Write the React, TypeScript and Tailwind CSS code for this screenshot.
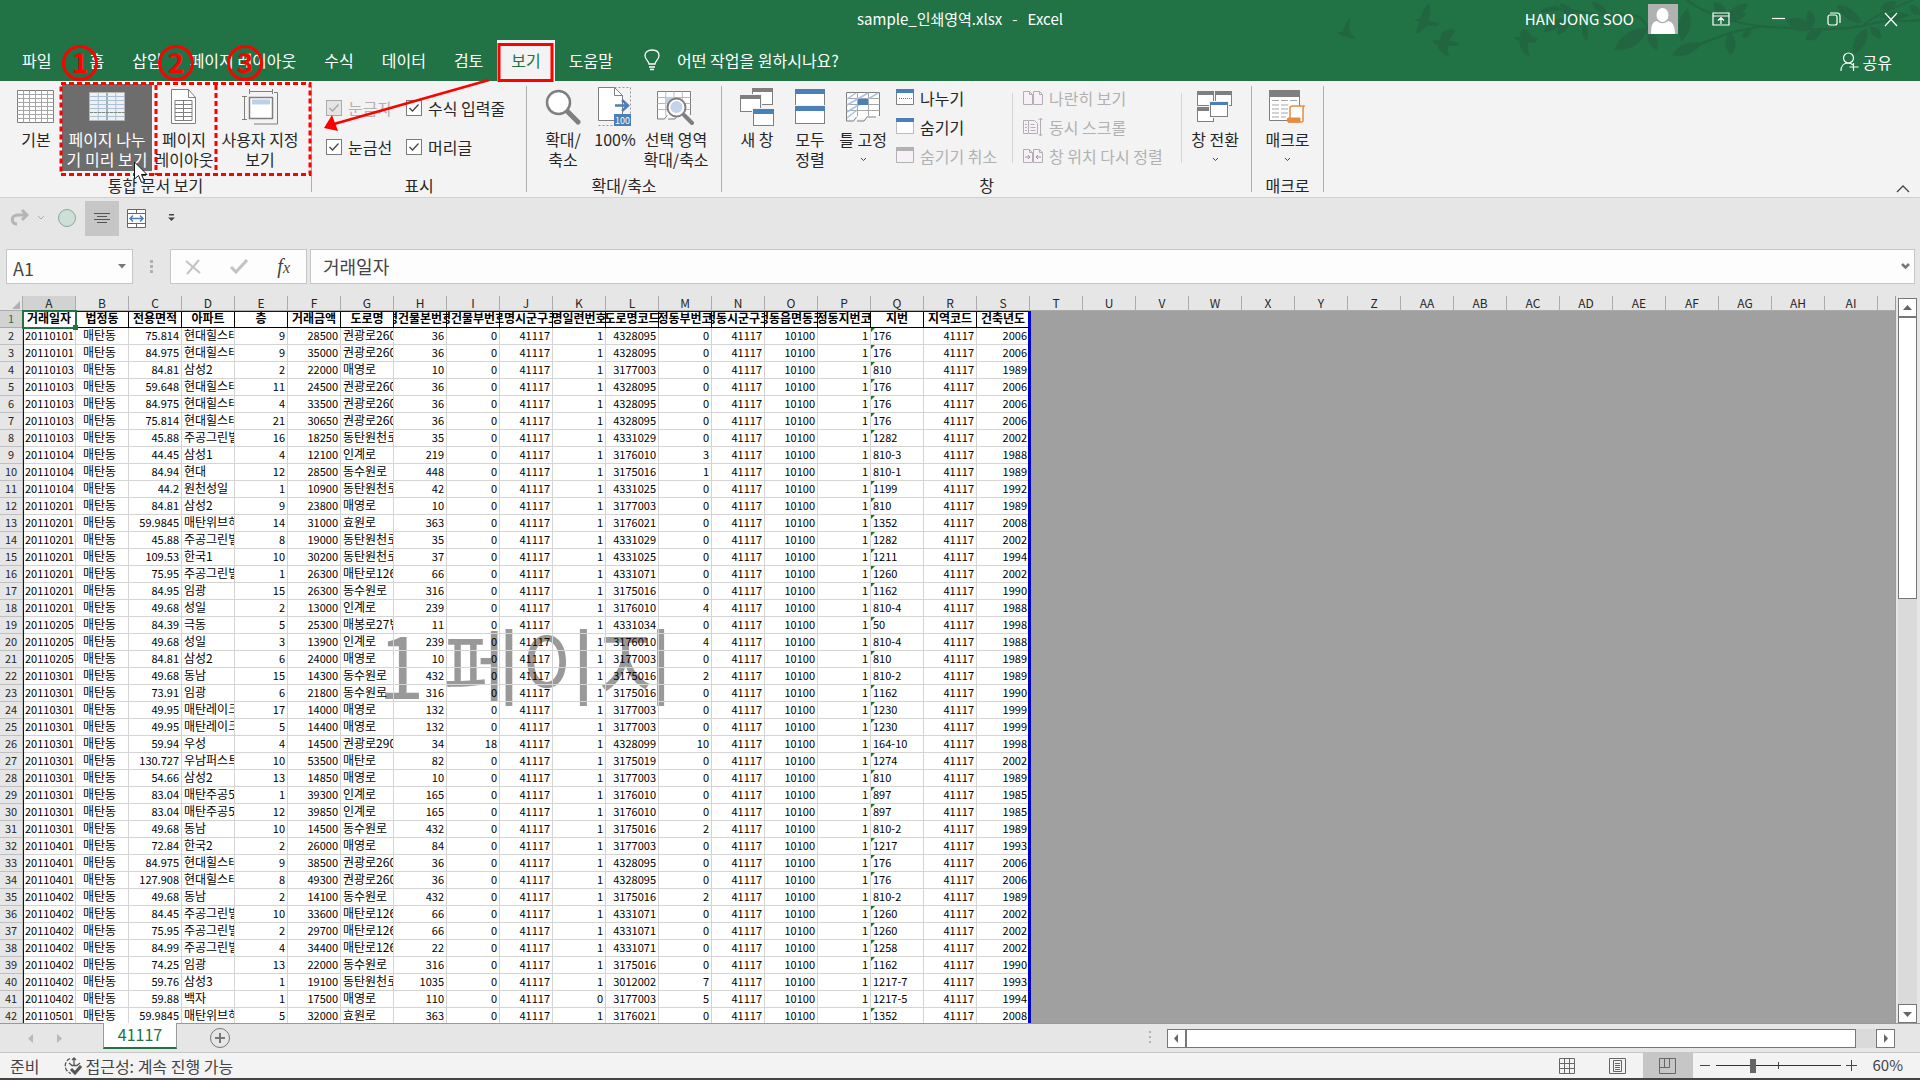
import type { ReactNode } from "react";
import clsx from "clsx";

const GRAY = "#7f7f7f";
const BLUE = "#4a7fb8";
const RED = "#ff0000";

// 날짜|면적|아파트|층|금액|도로명|본번|부번|일련번호|도로명코드|법정동부번|지번|건축년도
const RAW = `20110101|75.814|현대힐스테이트|9|28500|권광로260번길|36|0|1|4328095|0|176|2006
20110101|84.975|현대힐스테이트|9|35000|권광로260번길|36|0|1|4328095|0|176|2006
20110103|84.81|삼성2|2|22000|매영로|10|0|1|3177003|0|810|1989
20110103|59.648|현대힐스테이트|11|24500|권광로260번길|36|0|1|4328095|0|176|2006
20110103|84.975|현대힐스테이트|4|33500|권광로260번길|36|0|1|4328095|0|176|2006
20110103|75.814|현대힐스테이트|21|30650|권광로260번길|36|0|1|4328095|0|176|2006
20110103|45.88|주공그린빌|16|18250|동탄원천로|35|0|1|4331029|0|1282|2002
20110104|44.45|삼성1|4|12100|인계로|219|0|1|3176010|3|810-3|1988
20110104|84.94|현대|12|28500|동수원로|448|0|1|3175016|1|810-1|1989
20110104|44.2|원천성일|1|10900|동탄원천로|42|0|1|4331025|0|1199|1992
20110201|84.81|삼성2|9|23800|매영로|10|0|1|3177003|0|810|1989
20110201|59.9845|매탄위브하늘채|14|31000|효원로|363|0|1|3176021|0|1352|2008
20110201|45.88|주공그린빌|8|19000|동탄원천로|35|0|1|4331029|0|1282|2002
20110201|109.53|한국1|10|30200|동탄원천로|37|0|1|4331025|0|1211|1994
20110201|75.95|주공그린빌|1|26300|매탄로126번길|66|0|1|4331071|0|1260|2002
20110201|84.95|임광|15|26300|동수원로|316|0|1|3175016|0|1162|1990
20110201|49.68|성일|2|13000|인계로|239|0|1|3176010|4|810-4|1988
20110205|84.39|극동|5|25300|매봉로27번길|11|0|1|4331034|0|50|1998
20110205|49.68|성일|3|13900|인계로|239|0|1|3176010|4|810-4|1988
20110205|84.81|삼성2|6|24000|매영로|10|0|1|3177003|0|810|1989
20110301|49.68|동남|15|14300|동수원로|432|0|1|3175016|2|810-2|1989
20110301|73.91|임광|6|21800|동수원로|316|0|1|3175016|0|1162|1990
20110301|49.95|매탄레이크|17|14000|매영로|132|0|1|3177003|0|1230|1999
20110301|49.95|매탄레이크|5|14400|매영로|132|0|1|3177003|0|1230|1999
20110301|59.94|우성|4|14500|권광로290번길|34|18|1|4328099|10|164-10|1998
20110301|130.727|우남퍼스트빌|10|53500|매탄로|82|0|1|3175019|0|1274|2002
20110301|54.66|삼성2|13|14850|매영로|10|0|1|3177003|0|810|1989
20110301|83.04|매탄주공5|1|39300|인계로|165|0|1|3176010|0|897|1985
20110301|83.04|매탄주공5|12|39850|인계로|165|0|1|3176010|0|897|1985
20110301|49.68|동남|10|14500|동수원로|432|0|1|3175016|2|810-2|1989
20110401|72.84|한국2|2|26000|매영로|84|0|1|3177003|0|1217|1993
20110401|84.975|현대힐스테이트|9|38500|권광로260번길|36|0|1|4328095|0|176|2006
20110401|127.908|현대힐스테이트|8|49300|권광로260번길|36|0|1|4328095|0|176|2006
20110402|49.68|동남|2|14100|동수원로|432|0|1|3175016|2|810-2|1989
20110402|84.45|주공그린빌|10|33600|매탄로126번길|66|0|1|4331071|0|1260|2002
20110402|75.95|주공그린빌|2|29700|매탄로126번길|66|0|1|4331071|0|1260|2002
20110402|84.99|주공그린빌|4|34400|매탄로126번길|22|0|1|4331071|0|1258|2002
20110402|74.25|임광|13|22000|동수원로|316|0|1|3175016|0|1162|1990
20110402|59.76|삼성3|1|19100|동탄원천로|1035|0|1|3012002|7|1217-7|1993
20110402|59.88|백자|1|17500|매영로|110|0|0|3177003|5|1217-5|1994
20110501|59.9845|매탄위브하늘채|5|32000|효원로|363|0|1|3176021|0|1352|2008`;

const ROWS = RAW.split("\n").map((line) => {
  const [date, area, apt, floor, price, road, main, sub, serial, code, dongSub, lot, year] = line.split("|");
  return [date, "매탄동", area, apt, floor, price, road, main, sub, "41117", serial, code, dongSub, "41117", "10100", "1", lot, "41117", year];
});

const FIELDS = [
  "거래일자", "법정동", "전용면적", "아파트", "층", "거래금액", "도로명", "도로명건물본번호코드", "도로명건물부번호코드",
  "도로명시군구코드", "도로명일련번호코드", "도로명코드", "법정동부번코드", "법정동시군구코드", "법정동읍면동코드",
  "법정동지번코드", "지번", "지역코드", "건축년도",
];

const COLUMNS = Array.from({ length: 35 }, (_, i) =>
  i < 26 ? String.fromCharCode(65 + i) : "A" + String.fromCharCode(39 + i),
);

/* ---------- title bar ---------- */

const LEAVES = [
  [480, 20, 420, 35, 14], [500, 55, 430, 95, 26], [510, 60, 470, 105, 22], [480, 10, 530, 60, 24], [550, 70, 560, 125, 18],
  [745, 85, 643, 150, 44], [745, 90, 770, 150, 26], [862, 25, 845, 125, 36], [905, 130, 815, 165, 34], [990, 95, 993, 165, 30],
  [980, 50, 940, 5, 28], [975, 60, 1045, 10, 28], [985, 65, 1040, 40, 18], [1055, 90, 1025, 112, 20], [1235, 88, 1160, 60, 38],
  [1265, 88, 1215, 120, 30], [1235, 85, 1228, 30, 26], [1400, 85, 1360, 163, 34], [1385, 70, 1310, 15, 30],
  [1410, 80, 1445, 115, 24], [1440, 30, 1490, 5, 24], [1440, 50, 1530, 45, 22], [1530, 15, 1560, 45, 24], [620, 40, 575, 5, 22],
  [640, 45, 600, 80, 20],
];

const leafPath = ([x1, y1, x2, y2, w]: number[]) => {
  const len = Math.hypot(x2 - x1, y2 - y1);
  const nx = (-(y2 - y1) / len) * w;
  const ny = ((x2 - x1) / len) * w;
  const mx = (x1 + x2) / 2;
  const my = (y1 + y2) / 2;
  return `M${x1} ${y1}Q${mx + nx} ${my + ny} ${x2} ${y2}Q${mx - nx} ${my - ny} ${x1} ${y1}Z`;
};

const TreeArt = () => (
  <svg className="pointer-events-none absolute top-0 right-0" width="600" height="60" viewBox="-240 0 1800 180" fill="#216640">
    <path d="M-191 97l20-2c4-20 14-34 24-44-6 18-6 34-2 48 8 8 14 14 12 18-20-4-34-8-54-20z" />
    <path d="M41 57l20 0c4-20 14-42 26-46 6 12 6 32-2 50 12 4 24 6 33 11l-4 6-33-2c-8 12-22 24-34 24 2-14 8-24 10-34z" />
    <path d="M98 122l24-4c-2-14 8-30 34-30 8 2 10 6 8 10-8 6-14 14-14 24l27 6-2 10-32 0c0 12 0 24 6 32-20-6-34-18-36-34-8-2-14-8-15-14z" />
    <path d="M340 115c8-6 16-4 22-2-2-12 0-22 8-24 12 0 18 6 22 18l20 8-4 14-22-2c-4 14-2 30 4 42-20-4-30-24-32-46z" />
    <g fill="none" stroke="#216640" strokeWidth="7">
      <path d="M430 30C520 20 560 50 650 45S720 60 750 90" />
      <path d="M860 0C900 30 930 40 990 60S1100 80 1180 85S1350 90 1420 70S1500 70 1560 60" />
      <path d="M880 140C940 120 960 100 1080 80" />
      <path d="M1390 75C1420 50 1460 30 1540 0" strokeWidth="5" />
    </g>
    {LEAVES.map((l, i) => (
      <path key={i} d={leafPath(l)} />
    ))}
  </svg>
);

const WinButton = ({ label, children }: { label: string; children: ReactNode }) => (
  <button aria-label={label} className="flex h-full w-[57px] items-center justify-center">
    <svg width="18" height="16" fill="none" stroke="#fff" strokeWidth="1.2">
      {children}
    </svg>
  </button>
);

const TitleBar = () => (
  <div className="flex h-10 items-center pb-0.5 text-[15px] text-white">
    <div className="flex-1" />
    <span className="whitespace-pre">sample_인쇄영역.xlsx   -   Excel</span>
    <div className="relative z-10 flex h-full flex-1 items-center justify-end">
      <span>HAN JONG SOO</span>
      <svg className="mt-1 mr-3.5 ml-3.5 self-start" width="30" height="30">
        <path d="M0 0h30v30H0z" fill="#b1b1b1" />
        <ellipse cx="14.500" cy="11" rx="6" ry="7" fill="#fff" />
        <path d="M3 30c0-8 1-12 6-13 3 3 8 3 11 0 5 1 7 5 7 13z" fill="#fff" />
      </svg>
      <WinButton label="리본 메뉴 표시 옵션">
        <path d="M1 2h16v12H1zM1 5h16M9 13V7M6 9.500l3-3 3 3" />
      </WinButton>
      <WinButton label="최소화">
        <path d="M3 7.500h13" />
      </WinButton>
      <WinButton label="이전 크기로 복원">
        <rect x="2" y="4" width="9" height="10" rx="2" />
        <path d="M4 2h7q3 0 3 3v7" />
      </WinButton>
      <WinButton label="닫기">
        <path d="M2 2l12 13M14 2L2 15" />
      </WinButton>
    </div>
  </div>
);

const Tab = ({ children, active }: { children: ReactNode; active?: boolean }) => (
  <button className={clsx("h-full px-3.5 pb-0.5 whitespace-nowrap", active ? "bg-[#f3f3f3] text-[#217346]" : "text-white")}>
    {children}
  </button>
);

const TabBar = () => (
  <nav className="flex h-[41px] items-center pl-2">
    <Tab>파일</Tab>
    <span className="w-2.5" />
    <Tab>홈</Tab>
    <Tab>삽입</Tab>
    <Tab>페이지 레이아웃</Tab>
    <Tab>수식</Tab>
    <Tab>데이터</Tab>
    <Tab>검토</Tab>
    <Tab active>보기</Tab>
    <Tab>도움말</Tab>
    <button className="ml-4 flex h-full items-center gap-4 pb-0.5 text-white">
      <svg width="18" height="22" fill="none" stroke="#fff" strokeWidth="1.3">
        <path d="M6 15c0-3-4-4-4-8.500C2 3 5 1 9 1s7 2 7 5.500C16 11 12 12 12 15zM6 18h6M7 20.500h4" />
      </svg>
      어떤 작업을 원하시나요?
    </button>
    <button className="z-10 mt-0.5 mr-7 ml-auto flex items-center gap-1 text-white">
      <svg width="19" height="20" fill="none" stroke="#fff" strokeWidth="1.2">
        <circle cx="8.500" cy="6" r="5" />
        <path d="M1 19c0-5 3-8 7-8q3 0 5 2M13.500 11v8M9.500 15h9" />
      </svg>
      공유
    </button>
  </nav>
);

/* ---------- ribbon ---------- */

const grid = (x: number, y: number, w: number, h: number, nx: number, ny: number) => {
  let d = "";
  for (let i = 1; i < nx; i++) d += `M${x + (w * i) / nx} ${y}v${h}`;
  for (let i = 1; i < ny; i++) d += `M${x} ${y + (h * i) / ny}h${w}`;
  return d;
};

const NormalIcon = () => (
  <svg width="38" height="34" fill="none">
    <path d="M.5.5h36v32H.5z" fill="#fff" stroke={GRAY} />
    <path d={grid(0.5, 0.5, 36, 32, 6, 8)} stroke="#a6a6a6" />
  </svg>
);

const PageBreakIcon = () => (
  <svg width="37" height="30" fill="none">
    <path d="M.5.5h35v28H.5z" fill="#f0f0f0" stroke="#b5b5b5" />
    <path d={grid(0.5, 0.5, 35, 28, 4, 7)} stroke="#a9c0d8" />
    <path d="M18 1v28M1 20.500h35" stroke="#7b8a80" strokeDasharray="3 1" />
  </svg>
);

const PageLayoutIcon = () => (
  <svg width="26" height="36" fill="none" stroke={GRAY}>
    <path d="M.5.5h17l7 8v26H.5z" fill="#fff" />
    <path d="M17.500.5v8h7" />
    <path d="M4 11.500h17v20H4z" />
    <path d={grid(4, 11.5, 17, 20, 2, 5)} />
  </svg>
);

const CustomViewIcon = () => (
  <svg width="37" height="36" fill="none" stroke={GRAY}>
    <path d="M12 35h23.500V3.500H32" />
    <path d="M7.500 8.500h23v21h-23z" fill="#fff" strokeWidth="1.5" />
    <path d="M10 10.500h18v5H10z" fill="#bdd0e9" stroke="none" />
    <path d="M7.500 2.500h23M7.500 0v5M30.500 0v5M2.500 7.500v23M0 7.500h5M0 30.500h5" />
  </svg>
);

const ZoomIcon = () => (
  <svg width="36" height="36" fill="none" stroke={GRAY}>
    <path d="M22 22l11 11" strokeWidth="5" strokeLinecap="round" />
    <circle cx="13.500" cy="13.500" r="11.500" fill="#fff" strokeWidth="2.5" />
  </svg>
);

const HundredIcon = () => (
  <svg width="34" height="40" fill="none">
    <path d="M.5 38.500h32V.5H.5" stroke="#999" strokeDasharray="2 2" />
    <path d="M.5.5h16l8 8v25H.5z" fill="#fff" stroke={GRAY} />
    <path d="M16.500.5v8h8" stroke={GRAY} />
    <path d="M17 18.500h12M24 13l6 5.500-6 5.500" stroke={BLUE} strokeWidth="2.5" />
    <path d="M16 27h17v12H16z" fill={BLUE} />
    <text x="24.500" y="36.500" fontSize="9" fill="#fff" textAnchor="middle">
      100
    </text>
  </svg>
);

const ZoomSelectionIcon = () => (
  <svg width="38" height="36" fill="none">
    <path d="M.5 2.500h33v20l-4 6H.5z" fill="#fff" />
    <path d="M.5 30V2.500h33V26M.5 30h7l3-4M11 30h7l2-3" stroke={GRAY} />
    <path d={grid(0.5, 2.5, 33, 24, 4, 4)} stroke="#b9b9b9" />
    <path d="M9 8h8v7H9z" fill="#bdd0e9" />
    <path d="M27 26l8 8" stroke={GRAY} strokeWidth="4" strokeLinecap="round" />
    <circle cx="19.500" cy="18.500" r="9" fill="#fff" stroke={GRAY} strokeWidth="2" />
    <circle cx="19.500" cy="18" r="6" fill="#c3d4ea" />
  </svg>
);

const Win = ({ x, y, w, h, head, color }: { x: number; y: number; w: number; h: number; head: number; color: string }) => (
  <>
    <rect x={x - 1} y={y - 1} width={w + 2} height={h + 2} fill="#f3f3f3" />
    <rect x={x + 0.5} y={y + 0.5} width={w - 1} height={h - 1} fill="#fff" stroke={GRAY} />
    <rect x={x} y={y} width={w} height={head} fill={color} />
  </>
);

const NewWindowIcon = () => (
  <svg width="35" height="39">
    <Win x={12} y={1} w={21} h={17} head={4} color={GRAY} />
    <Win x={0} y={8} w={21} h={17} head={4} color={GRAY} />
    <Win x={13} y={22} w={21} h={17} head={5} color={BLUE} />
  </svg>
);

const ArrangeIcon = () => (
  <svg width="31" height="36">
    <Win x={0} y={0} w={30} h={18} head={5} color={BLUE} />
    <Win x={0} y={17} w={30} h={18} head={5} color={BLUE} />
  </svg>
);

const FreezeIcon = () => (
  <svg width="35" height="32" fill="none">
    <path d="M.5 1.500h33v20l-4 6H.5z" fill="#fff" />
    <path d="M.5 30V1.500h33V25M.5 30h7l3-4M11 30h7l3-4h9" stroke={GRAY} />
    <path d={grid(0.5, 1.5, 33, 24, 3, 4)} stroke="#a6a6a6" />
    <path d="M1 8l9-6M1 14l21-12M1 21l31-19M1 27l10-8" stroke="#a9c0e0" strokeWidth="1.5" />
    <path d="M12 8h10v6H12z" fill={BLUE} />
  </svg>
);

const SwitchIcon = () => (
  <svg width="36" height="33">
    <Win x={0} y={1} w={17} h={15} head={4} color={GRAY} />
    <Win x={18} y={1} w={17} h={15} head={4} color={GRAY} />
    <Win x={0} y={17} w={17} h={15} head={4} color={GRAY} />
    <Win x={13} y={12} w={18} h={15} head={3} color={BLUE} />
  </svg>
);

const MacroIcon = () => (
  <svg width="37" height="34" fill="none">
    <path d="M.5.5h30v30H.5z" fill="#fff" stroke={GRAY} />
    <path d="M0 0h31v7H0z" fill={GRAY} />
    <path d="M3 10.500h7m2 0h7m2 0h7M3 15h7m2 0h7M3 19h7m2 0h7M3 23h7m2 0h7M3 27h7m2 0h5" stroke="#a6a6a6" />
    <path d="M21 29V18q0-2 3-2h11l-1 2v13q0 1-3 1H20z" fill="#fff" stroke="#e58c43" strokeWidth="1.5" />
    <path d="M19 28h12v4H19q-2-2 0-4z" fill="#e58c43" stroke="#e58c43" />
  </svg>
);

const SmallWin = ({ head, edge, dashed, split }: { head: string; edge: string; dashed?: boolean; split?: boolean }) => (
  <svg width="18" height="17" fill="none">
    <path d="M.5.5h17v15H.5z" fill={edge === GRAY ? "#fff" : "#f7f0f7"} stroke={edge} strokeDasharray={dashed ? "1 1" : undefined} />
    <path d="M0 0h18v4H0z" fill={head} />
    {split && <path d="M3 9.500h13" stroke={BLUE} strokeDasharray="1 1" />}
  </svg>
);

const PairIcon = ({ arrows }: { arrows?: boolean }) => (
  <svg width="20" height="16" fill="none" stroke="#b4aeb4">
    <path d="M.5 1.500h6l3 3v10h-9zM10.500 1.500h6l3 3v10h-9z" fill="#f7f0f7" />
    <path d="M6.500 1.500v3h3M16.500 1.500v3h3" />
    {arrows && <path d="M2 9h5M5 7l2 2-2 2M18 9h-5M15 7l-2 2 2 2" stroke="#999" />}
  </svg>
);

const SyncScrollIcon = () => (
  <svg width="20" height="20" fill="none" stroke="#b4aeb4">
    <path d="M5 3.500H.5v13H5M5.500 3.500h6l3 3v10h-9z" fill="#f7f0f7" />
    <path d="M2 7.500h2m-2 3h2m-2 3h2M7.500 7.500h4m-4 3h5m-5 3h5M17.500 1v18M15.500 3l2-2 2 2M15.500 17l2 2 2-2" />
  </svg>
);

const Chevron = () => (
  <svg className="mt-2" width="7" height="5" fill="none" stroke="#444">
    <path d="M1 1l2.500 2.500L6 1" />
  </svg>
);

const BigButton = (props: { icon: ReactNode; lines: string[]; width: string; active?: boolean; menu?: boolean }) => (
  <button
    className={clsx(
      "mt-[3px] flex h-[87px] flex-col items-center leading-5 whitespace-nowrap",
      props.width,
      props.active && "bg-[#6d6d6d] text-white",
    )}
  >
    <span className="flex h-[45px] shrink-0 items-center">{props.icon}</span>
    {props.lines.map((line) => (
      <span key={line}>{line}</span>
    ))}
    {props.menu && <Chevron />}
  </button>
);

const SmallButton = ({ icon, children, disabled }: { icon: ReactNode; children: ReactNode; disabled?: boolean }) => (
  <button disabled={disabled} className="flex h-[29px] items-center gap-1.5 whitespace-nowrap disabled:text-[#b1b1b1]">
    {icon}
    {children}
  </button>
);

const Check = ({ id, label, disabled }: { id: string; label: string; disabled?: boolean }) => (
  <div className="flex h-[39px] items-center gap-1.5 whitespace-nowrap">
    <span className="relative flex">
      <input
        id={id}
        type="checkbox"
        defaultChecked
        disabled={disabled}
        className="size-4 appearance-none border border-[#7a7a7a] bg-white disabled:border-[#aaa] disabled:bg-[#e4e4e4]"
      />
      <svg className="pointer-events-none absolute inset-0" width="16" height="16" fill="none" stroke={disabled ? "#a6a6a6" : "#444"}>
        <path d="M3.500 8l3 3 6-6.500" strokeWidth="1.3" />
      </svg>
    </span>
    <label htmlFor={id} className={disabled ? "text-[#b1b1b1]" : ""}>
      {label}
    </label>
  </div>
);

const Group = ({ caption, width, pad, children }: { caption: string; width: string; pad?: string; children: ReactNode }) => (
  <>
    <section className={clsx("flex shrink-0 flex-col", width)}>
      <div className={clsx("flex h-[94px]", pad)}>{children}</div>
      <div className="pb-0.5 text-center leading-5">{caption}</div>
    </section>
    <div className="my-[5px] w-px shrink-0 bg-[#b0b0b0]" />
  </>
);

const Ribbon = () => (
  <div className="flex border-b border-[#d0d0d0] bg-[#f3f3f3] text-[#262626]">
    <Group caption="통합 문서 보기" width="w-[311px]" pad="pl-2.5">
      <BigButton width="w-[52px]" icon={<NormalIcon />} lines={["기본"]} />
      <BigButton width="w-[90px]" icon={<PageBreakIcon />} lines={["페이지 나누", "기 미리 보기"]} active />
      <BigButton width="w-16" icon={<PageLayoutIcon />} lines={["페이지", "레이아웃"]} />
      <BigButton width="w-[88px]" icon={<CustomViewIcon />} lines={["사용자 지정", "보기"]} />
    </Group>
    <Group caption="표시" width="w-[214px]" pad="pl-3.5">
      <div className="grid grid-cols-[80px_auto] content-start pt-[7px]">
        <Check id="ruler" label="눈금자" disabled />
        <Check id="formula-bar" label="수식 입력줄" />
        <Check id="gridlines" label="눈금선" />
        <Check id="headings" label="머리글" />
      </div>
    </Group>
    <Group caption="확대/축소" width="w-[194px]" pad="pl-1.5">
      <BigButton width="w-[60px]" icon={<ZoomIcon />} lines={["확대/", "축소"]} />
      <BigButton width="w-11" icon={<HundredIcon />} lines={["100%"]} />
      <BigButton width="w-[78px]" icon={<ZoomSelectionIcon />} lines={["선택 영역", "확대/축소"]} />
    </Group>
    <Group caption="창" width="w-[529px]" pad="pl-[5px]">
      <BigButton width="w-[60px]" icon={<NewWindowIcon />} lines={["새 창"]} />
      <BigButton width="w-[46px]" icon={<ArrangeIcon />} lines={["모두", "정렬"]} />
      <BigButton width="w-[60px]" icon={<FreezeIcon />} lines={["틀 고정"]} menu />
      <div className="w-[119px] pt-0.5 pl-[3px]">
        <SmallButton icon={<SmallWin head={BLUE} edge={GRAY} split />}>나누기</SmallButton>
        <SmallButton icon={<SmallWin head={BLUE} edge={GRAY} dashed />}>숨기기</SmallButton>
        <SmallButton icon={<SmallWin head="#b1b1b1" edge="#b1b1b1" />} disabled>
          숨기기 취소
        </SmallButton>
      </div>
      <div className="mt-3 mb-3 w-px bg-[#d4d4d4]" />
      <div className="w-[168px] pt-0.5 pl-2.5">
        <SmallButton icon={<PairIcon />} disabled>
          나란히 보기
        </SmallButton>
        <SmallButton icon={<SyncScrollIcon />} disabled>
          동시 스크롤
        </SmallButton>
        <SmallButton icon={<PairIcon arrows />} disabled>
          창 위치 다시 정렬
        </SmallButton>
      </div>
      <div className="mt-3 mb-3 w-px bg-[#d4d4d4]" />
      <BigButton width="w-[66px]" icon={<SwitchIcon />} lines={["창 전환"]} menu />
    </Group>
    <Group caption="매크로" width="w-[71px]">
      <BigButton width="w-full" icon={<MacroIcon />} lines={["매크로"]} menu />
    </Group>
    <button aria-label="리본 메뉴 축소" className="mr-2.5 mb-1 ml-auto self-end">
      <svg width="14" height="9" fill="none" stroke="#444" strokeWidth="1.3">
        <path d="M1 8l6-6 6 6" />
      </svg>
    </button>
  </div>
);

/* ---------- numbered marks drawn over the ribbon ---------- */

const StepNumber = ({ n, left }: { n: number; left: string }) => (
  <span
    className={clsx(
      "absolute top-[45px] flex size-9 items-center justify-center rounded-full border-3 border-[#ff0000] pb-1 text-[28px] leading-none font-bold text-[#ff0000]",
      left,
    )}
  >
    {n}
  </span>
);

const Marks = () => (
  <div className="pointer-events-none absolute inset-0 z-20">
    <svg className="absolute top-0 left-0" width="620" height="190" fill="none" stroke={RED}>
      <g strokeWidth="3" strokeDasharray="5 3">
        <path d="M61 83.500h249v91H61z" />
        <path d="M156 85v90M216 85v90" />
      </g>
      <path d="M499 44.500h53v36h-53z" strokeWidth="3" />
      <path d="M489 80L334 124" strokeWidth="2.5" />
      <path d="M324 128l8-13 6 16z" fill={RED} stroke="none" />
      <path d="M134.500 162v17l4-3.500 3 7 3-1-3-7h5.500z" fill="#fff" stroke="#111" />
    </svg>
    <StepNumber n={1} left="left-[62px]" />
    <StepNumber n={2} left="left-[158px]" />
    <StepNumber n={3} left="left-[227px]" />
  </div>
);

/* ---------- quick access + formula bar ---------- */

const QuickAccess = () => (
  <div className="flex h-10 items-center pl-2.5">
    <button aria-label="다시 실행" disabled>
      <svg width="19" height="18" fill="none" stroke="#b5b5b5" strokeWidth="3">
        <path d="M7 15C1 15 0 6 8 6h8M12 1l5 5-5 5" />
      </svg>
    </button>
    <svg className="ml-2" width="8" height="6" fill="none" stroke="#aaa">
      <path d="M1 1l3 3 3-3" />
    </svg>
    <button aria-label="기록" className="ml-[13px] size-[18px] rounded-full border border-[#7fae9a] bg-[#cfdfd8]" />
    <button aria-label="가운데 맞춤" className="ml-[9px] flex h-[35px] w-[34px] items-center justify-center bg-[#c6c6c6]">
      <svg width="16" height="12" stroke="#555">
        <path d="M0 1.500h16M3 4.500h10M0 7.500h16M3 10.500h10" />
      </svg>
    </button>
    <button aria-label="병합하고 가운데 맞춤" className="ml-2">
      <svg width="19" height="19" fill="none" stroke="#666">
        <path d="M.5.5h18v18H.5zM.5 4.500h18M.5 14.500h18M9.500.5v4M9.500 14.500v4" fill="#fff" />
        <path d="M3 9.500h13M6 6.500l-3 3 3 3M13 6.500l3 3-3 3" stroke={BLUE} strokeWidth="1.5" />
      </svg>
    </button>
    <button aria-label="빠른 실행 도구 모음 사용자 지정" className="ml-[22px]">
      <svg width="7" height="8" fill="#444">
        <path d="M1 0h5v1.500H1zM0 3.500h7L3.500 7z" />
      </svg>
    </button>
  </div>
);

const FormulaBar = () => (
  <div className="mt-[11px] mb-3 flex h-[35px] items-stretch pr-[5px] pl-1.5 text-lg text-[#444]">
    <div className="flex w-[127px] items-center border border-[#c6c6c6] bg-[#fdfdfd] pr-1.5">
      <input aria-label="이름 상자" defaultValue="A1" className="w-full min-w-0 pt-0.5 pl-1.5 outline-none" />
      <button aria-label="이름 목록">
        <svg width="8" height="5" fill="#777">
          <path d="M0 0h8L4 4.500z" />
        </svg>
      </button>
    </div>
    <svg className="mx-[17px] self-center" width="3" height="14" fill="#b0b0b0">
      <path d="M0 0h3v3H0zM0 5h3v3H0zM0 10h3v3H0z" />
    </svg>
    <div className="flex w-[137px] items-center justify-between border border-[#c6c6c6] bg-[#fdfdfd] px-3.5">
      <button aria-label="취소">
        <svg width="16" height="16" fill="none" stroke="#c3c3c3" strokeWidth="2">
          <path d="M1 2l14 12M14 1L2 15" />
        </svg>
      </button>
      <button aria-label="입력">
        <svg width="18" height="15" fill="none" stroke="#c3c3c3" strokeWidth="3">
          <path d="M1 8l5 5L17 1" />
        </svg>
      </button>
      <button aria-label="함수 삽입" className="pr-0.5 font-['Liberation_Serif',serif] text-xl leading-6 text-[#444] italic">
        f<span className="text-base">x</span>
      </button>
    </div>
    <div className="ml-[3px] flex flex-1 items-center border border-[#c6c6c6] bg-[#fdfdfd] pr-1">
      <input aria-label="수식 입력줄" defaultValue="거래일자" className="min-w-0 flex-1 pb-0.5 pl-3 outline-none" />
      <svg width="9" height="7" fill="none" stroke="#777" strokeWidth="2.5">
        <path d="M1 1l3.500 3.500L8 1" />
      </svg>
    </div>
  </div>
);

/* ---------- sheet ---------- */

const LEFT_ALIGNED = [1, 3, 6, 16];

const Cell = ({ value, col }: { value: string; col: number }) => (
  <td
    className={clsx(
      "relative overflow-hidden border-r border-b border-[#d4d4d4] px-0.5 pb-0.5 whitespace-nowrap",
      LEFT_ALIGNED.includes(col) ? "text-left" : "text-right",
      col === 1 && "pl-[7px]",
      (col === 1 || col === 3 || col === 6) && "text-xs/[14px]",
    )}
  >
    {col === 16 && !value.includes("-") && (
      <svg className="absolute top-0 left-0" width="4" height="4" fill="#107c10">
        <path d="M0 0h4L0 4z" />
      </svg>
    )}
    {value}
  </td>
);

const Sheet = () => (
  <div className="relative min-w-0 flex-1 overflow-hidden border-r border-[#999]">
    <div className="absolute top-[15px] bottom-0 left-[23px] flex w-[1007px] items-center justify-center bg-white pb-2 text-[84px] leading-none text-[#999]">
      <span>1 페이지</span>
    </div>
    <table className="relative w-full table-fixed border-separate border-spacing-0 text-[11px]/[14px] text-black">
      <colgroup>
        <col className="w-[23px]" />
        {COLUMNS.map((c) => (
          <col key={c} className="w-[53px]" />
        ))}
        <col />
      </colgroup>
      <thead>
        <tr className="bg-[#e6e6e6] text-xs/[14px]">
          <th className="border-r border-b border-[#ababab] p-0">
            <svg className="mt-1 ml-3" width="8" height="8" fill="#b0b0b0">
              <path d="M8 0v8H0z" />
            </svg>
          </th>
          {COLUMNS.map((c, i) => (
            <th
              key={c}
              className={clsx(
                "border-r border-b border-[#ababab] p-0 font-normal text-[#262626]",
                i === 0 && "bg-[#d2d2d2] text-[#217346]",
              )}
            >
              {c}
            </th>
          ))}
          <th className="border-b border-[#ababab] p-0" />
        </tr>
      </thead>
      <tbody>
        <tr>
          <th className="border-r border-b border-[#ababab] bg-[#d2d2d2] p-0 pb-0.5 font-normal text-[#217346]">1</th>
          {FIELDS.map((name) => (
            <td key={name} className="border-r border-b border-black p-0 text-xs/4 font-bold">
              <div className="flex justify-center overflow-hidden pb-0.5 leading-[14px] whitespace-nowrap">
                <span className="shrink-0">{name}</span>
              </div>
            </td>
          ))}
          <td colSpan={17} className="bg-[#a0a0a0]" />
        </tr>
        {ROWS.map((row, r) => (
          <tr key={r}>
            <th className="border-r border-b border-[#c0c0c0] bg-[#e6e6e6] p-0 pb-0.5 font-normal text-[#262626]">{r + 2}</th>
            {row.map((value, c) => (
              <Cell key={c} value={value} col={c} />
            ))}
            <td colSpan={17} className="bg-[#a0a0a0]" />
          </tr>
        ))}
      </tbody>
    </table>
    <div className="pointer-events-none absolute top-[15px] bottom-0 left-[23px] w-[1008px] border-t border-r-3 border-l border-[#0000cc]" />
    <div className="pointer-events-none absolute top-[14px] left-[22px] h-[19px] w-[55px] border-2 border-[#217346]">
      <span className="absolute -right-[3px] -bottom-[3px] size-[5px] bg-[#217346]" />
    </div>
  </div>
);

const ScrollButton = ({ label, d }: { label: string; d: string }) => (
  <button aria-label={label} className="flex size-[19px] shrink-0 items-center justify-center border border-[#777] bg-white">
    <svg width="9" height="9" fill="#666">
      <path d={d} />
    </svg>
  </button>
);

const SheetTabs = () => (
  <div className="flex h-[29px] shrink-0 border-t border-[#999] pr-[25px]">
    <button aria-label="이전 시트" className="ml-7 self-center">
      <svg width="5" height="9" fill="#b9b9b9">
        <path d="M5 0v9L0 4.500z" />
      </svg>
    </button>
    <button aria-label="다음 시트" className="ml-6 self-center">
      <svg width="5" height="9" fill="#b9b9b9">
        <path d="M0 0v9l5-4.500z" />
      </svg>
    </button>
    <button className="-mt-px ml-[41px] h-[26px] w-[74px] border-x border-b-2 border-x-[#999] border-b-[#217346] bg-white pb-0.5 leading-[22px] text-[#217346]">
      41117
    </button>
    <button aria-label="새 시트" className="ml-[33px] self-center">
      <svg width="20" height="20" fill="none" stroke="#777">
        <circle cx="10" cy="10" r="9.500" />
        <path d="M10 5v10M5 10h10" strokeWidth="2" />
      </svg>
    </button>
    <svg className="mr-[15px] ml-auto self-center" width="3" height="14" fill="#b0b0b0">
      <path d="M0 0h2v2H0zM0 5h2v2H0zM0 10h2v2H0z" />
    </svg>
    <div className="flex w-[728px] self-center bg-[#dadada]">
      <ScrollButton label="왼쪽으로 스크롤" d="M6 0v9L2 4.500z" />
      <div className="mr-5 h-[19px] flex-1 border border-[#777] bg-white" />
      <ScrollButton label="오른쪽으로 스크롤" d="M3 0v9l4-4.500z" />
    </div>
  </div>
);

const ViewButton = ({ label, active, children }: { label: string; active?: boolean; children: ReactNode }) => (
  <button aria-label={label} className={clsx("flex h-full w-[50px] items-center justify-center", active && "bg-[#c6c6c6]")}>
    <svg width="17" height="16" fill="none" stroke="#666">
      {children}
    </svg>
  </button>
);

const StatusBar = () => (
  <footer className="flex h-[28px] shrink-0 items-center border-t border-b-2 border-t-[#c6c6c6] border-b-[#444] bg-[#f3f3f3] text-[#444]">
    <span className="ml-2.5">준비</span>
    <button className="ml-6 flex items-center gap-[3px]">
      <svg width="19" height="18" fill="none" stroke="#555" strokeWidth="1.3">
        <path d="M7 1.500a8 8 0 0 0 1 15" strokeDasharray="4 1.500" />
        <path d="M11 1v7M6 6l3 2.500h5l3-2.500M9 3l2-2 2 2" />
        <path d="M8 12l4 4 6-7" strokeWidth="3" />
      </svg>
      접근성: 계속 진행 가능
    </button>
    <div className="ml-auto flex h-full items-center">
      <ViewButton label="기본">
        <path d="M.5.5h15v15H.5zM5.500.5v15M10.500.5v15M.5 5.500h15M.5 10.500h15" />
      </ViewButton>
      <ViewButton label="페이지 레이아웃">
        <path d="M.5.5h16v15H.5zM4.500 2.500h8v11h-8zM6 5.500h5M6 7.500h5M6 9.500h5M6 11.500h5" />
      </ViewButton>
      <ViewButton label="페이지 나누기 미리 보기" active>
        <path d="M.5.5h16v15H.5zM.5 9.500h10V.5M5.500.5v9" />
      </ViewButton>
      <button aria-label="축소" className="ml-[7px] h-px w-[10px] bg-[#444]" />
      <div className="relative ml-1.5 flex w-[125px] items-center">
        <span className="absolute left-1/2 h-[7px] w-px bg-[#444]" />
        <input
          aria-label="확대/축소 비율"
          type="range"
          defaultValue={29}
          className="relative h-px w-full appearance-none bg-[#333] [&::-webkit-slider-thumb]:h-3.5 [&::-webkit-slider-thumb]:w-1.5 [&::-webkit-slider-thumb]:appearance-none [&::-webkit-slider-thumb]:bg-[#666]"
        />
      </div>
      <button aria-label="확대" className="ml-[5px]">
        <svg width="11" height="11" stroke="#444">
          <path d="M0 5.500h11M5.500 0v11" />
        </svg>
      </button>
      <span className="mr-[17px] ml-4 text-[15px]">60%</span>
    </div>
  </footer>
);

export default function App() {
  return (
    <div className="flex h-screen flex-col overflow-hidden bg-[#e6e6e6] font-['Noto_Sans_CJK_KR',sans-serif] text-base">
      <div className="relative shrink-0">
        <header className="relative bg-[#217346]">
          <TreeArt />
          <TitleBar />
          <TabBar />
        </header>
        <Ribbon />
        <Marks />
      </div>
      <div className="shrink-0">
        <QuickAccess />
        <FormulaBar />
      </div>
      <main className="flex min-h-0 flex-1">
        <Sheet />
        <div className="mt-0.5 mr-[3px] ml-0.5 flex w-[19px] flex-col bg-[#dadada]">
          <ScrollButton label="위로 스크롤" d="M0 7h9L4.500 2z" />
          <div className="h-[282px] border border-[#777] bg-white" />
          <span className="flex-1" />
          <ScrollButton label="아래로 스크롤" d="M0 3h9L4.500 8z" />
        </div>
      </main>
      <SheetTabs />
      <StatusBar />
    </div>
  );
}
